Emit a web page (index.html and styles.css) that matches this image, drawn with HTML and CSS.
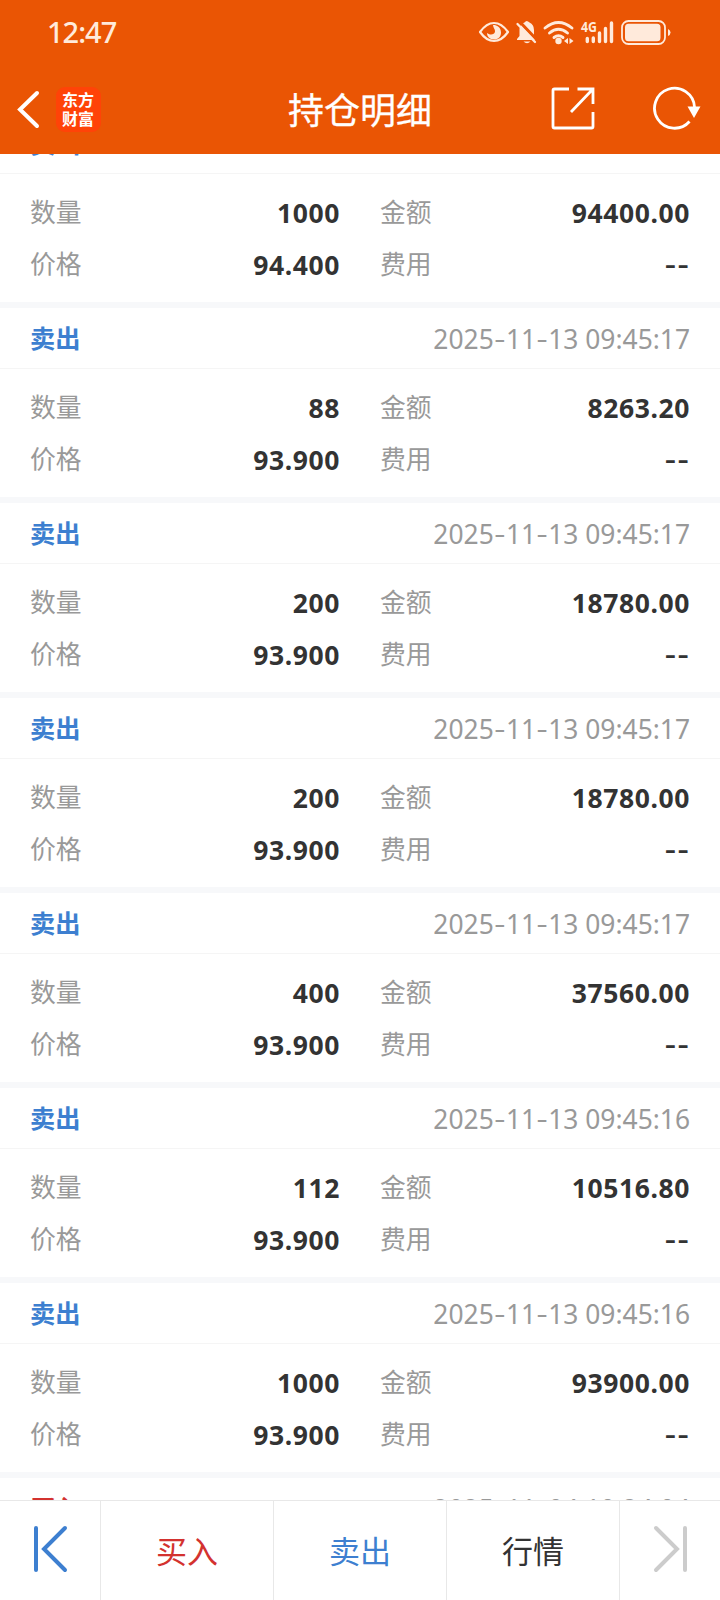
FILE: index.html
```
<!DOCTYPE html>
<html lang="zh-CN">
<head>
<meta charset="utf-8">
<title>持仓明细</title>
<link rel="stylesheet" href="styles.css">
</head>
<body>
<div class="screen">
  <header class="top">
    <div class="status">
      <span class="clock">12:47</span>
      <svg class="status-icons" width="200" height="40" viewBox="0 0 200 40" fill="none" stroke="#ffeadb" stroke-linecap="round" stroke-linejoin="round">
        <path d="M5 21C10 14 15 12 19 12S28 14 33 21C28 28 23 30 19 30S10 28 5 21Z" stroke-width="2.200"/>
        <path d="M18 14C20.500 13.500 26 15.500 26 21.500C26 26 23 28.500 19 28.500C14.500 28.500 12 25.500 12 22C14 24 19.500 24.500 20 20.500C20.200 18 18.500 17.500 18 14Z" fill="#ffeadb" stroke="none"/>
        <path d="M44.500 17.500Q46 12.500 49.500 11.500Q51.500 8.500 54.500 11.500Q59 13.500 59 19V26L60 29H42V28L44.500 25Z" fill="#ffeadb" stroke="none"/>
        <path d="M48.500 30.500H55.500Q52 34 48.500 30.500Z" fill="#ffeadb" stroke="none"/>
        <path d="M44 10L63 30" stroke="#ea5504" stroke-width="3"/>
        <path d="M42.500 13L60 31" stroke-width="2.300"/>
        <path d="M70 17Q83.500 6 97 17M74.500 22Q83.500 14.500 92.500 22M79 26.500Q83.500 23 88 26.500" stroke-width="2.900"/>
        <circle cx="83.500" cy="30" r="3.200" fill="#ffeadb" stroke="none"/>
        <path d="M93 27V33L89 30ZM94.500 27V33L98.500 30Z" fill="#ffeadb" stroke="none"/>
        <path d="M112.300 27.500V30.500M118.300 27V30.500M124.500 22V30.500M130.500 17.500V30.500M136.500 12V30.500" stroke-width="3.400"/>
        <rect x="147" y="10" width="43" height="23" rx="6.500" stroke-width="1.800"/>
        <rect x="150" y="12.800" width="35.500" height="17.500" rx="3.500" fill="#ffeadb" stroke="none"/>
        <path d="M193 18V25Q195.500 24 195.500 21.500T193 18Z" fill="#ffeadb" stroke="none"/>
        <text class="net" x="106" y="21" textLength="16" lengthAdjust="spacingAndGlyphs">4G</text>
      </svg>
    </div>
    <div class="nav">
      <svg class="back" width="24" height="40" viewBox="0 0 24 40"><path d="M20 4L3 20.500L20 37" fill="none" stroke="#fff" stroke-width="4" stroke-linecap="round"/></svg>
      <div class="logo"><span>东方</span><span>财富</span></div>
      <h1 class="title">持仓明细</h1>
      <svg class="share" width="44" height="44" viewBox="0 0 44 44" fill="none" stroke="#fff" stroke-width="2.800"><path d="M18 2H3.500Q2 2 2 3.500V39.500Q2 41 3.500 41H40.500Q42 41 42 39.500V25M26.500 2H42V17M20 25L41 3"/></svg>
      <svg class="reload" width="50" height="46" viewBox="0 0 50 46"><path d="M37.500 35.500A20 20 0 1 1 42.500 21" fill="none" stroke="#fff" stroke-width="2.800"/><path d="M35.500 20.500H48.500L42 32Z" fill="#fff"/></svg>
    </div>
  </header>

  <main class="list">
    <section class="card">
      <div class="card-head"><b class="sell">卖出</b><time>2025<i>-</i>11<i>-</i>13 09:45:17</time></div>
      <div class="card-body"><span>数量</span><b>1000</b><span>金额</span><b>94400.00</b><span>价格</span><b>94.400</b><span>费用</span><b class="none">--</b></div>
    </section>
    <section class="card">
      <div class="card-head"><b class="sell">卖出</b><time>2025<i>-</i>11<i>-</i>13 09:45:17</time></div>
      <div class="card-body"><span>数量</span><b>88</b><span>金额</span><b>8263.20</b><span>价格</span><b>93.900</b><span>费用</span><b class="none">--</b></div>
    </section>
    <section class="card">
      <div class="card-head"><b class="sell">卖出</b><time>2025<i>-</i>11<i>-</i>13 09:45:17</time></div>
      <div class="card-body"><span>数量</span><b>200</b><span>金额</span><b>18780.00</b><span>价格</span><b>93.900</b><span>费用</span><b class="none">--</b></div>
    </section>
    <section class="card">
      <div class="card-head"><b class="sell">卖出</b><time>2025<i>-</i>11<i>-</i>13 09:45:17</time></div>
      <div class="card-body"><span>数量</span><b>200</b><span>金额</span><b>18780.00</b><span>价格</span><b>93.900</b><span>费用</span><b class="none">--</b></div>
    </section>
    <section class="card">
      <div class="card-head"><b class="sell">卖出</b><time>2025<i>-</i>11<i>-</i>13 09:45:17</time></div>
      <div class="card-body"><span>数量</span><b>400</b><span>金额</span><b>37560.00</b><span>价格</span><b>93.900</b><span>费用</span><b class="none">--</b></div>
    </section>
    <section class="card">
      <div class="card-head"><b class="sell">卖出</b><time>2025<i>-</i>11<i>-</i>13 09:45:16</time></div>
      <div class="card-body"><span>数量</span><b>112</b><span>金额</span><b>10516.80</b><span>价格</span><b>93.900</b><span>费用</span><b class="none">--</b></div>
    </section>
    <section class="card">
      <div class="card-head"><b class="sell">卖出</b><time>2025<i>-</i>11<i>-</i>13 09:45:16</time></div>
      <div class="card-body"><span>数量</span><b>1000</b><span>金额</span><b>93900.00</b><span>价格</span><b>93.900</b><span>费用</span><b class="none">--</b></div>
    </section>
    <section class="card">
      <div class="card-head"><b class="buy">买入</b><time>2025<i>-</i>11<i>-</i>04 10:24:04</time></div>
    </section>
  </main>

  <footer class="bar">
    <div class="cell"><svg width="36" height="50" viewBox="0 0 36 50" fill="none" stroke="#3d7fd0" stroke-width="4" stroke-linecap="round"><path d="M4 4V46M33 4L12 25L33 46"/></svg></div>
    <div class="cell buy">买入</div>
    <div class="cell sell">卖出</div>
    <div class="cell">行情</div>
    <div class="cell"><svg width="36" height="50" viewBox="0 0 36 50" fill="none" stroke="#ccc" stroke-width="4" stroke-linecap="round"><path d="M33 4V46M4 4L25 25L4 46"/></svg></div>
  </footer>
</div>
</body>
</html>
```
FILE: styles.css
```
* { box-sizing: border-box; }
body { margin: 0; }
.screen {
  width: 720px;
  height: 1600px;
  display: flex;
  flex-direction: column;
  overflow: hidden;
  background: #fff;
  color: #333;
  font-family: "Noto Sans", "Noto Sans CJK SC", sans-serif;
}
.top { height: 154px; flex: none; background: #ea5504; color: #fff; }
.status { height: 64px; display: flex; justify-content: space-between; padding: 0 45px 0 47px; }
.clock { color: #ffeadb; font-size: 29px; line-height: 64px; font-weight: 500; letter-spacing: -1px; }
.status-icons { margin-top: 11px; }
.net { font: 700 14px "Noto Sans", sans-serif; fill: #ffeadb; stroke: none; }
.nav {
  height: 90px;
  display: grid;
  grid-template-columns: 24px 60px 1fr 44px 57px 50px;
  align-items: center;
  padding: 0 18px 0 17px;
}
.back { margin-top: -1px; }
.logo {
  margin-left: 15px;
  width: 45px;
  height: 45px;
  border-radius: 9px;
  background: #ff4308;
  font: 700 16px/19px "Noto Sans CJK SC", sans-serif;
  display: flex;
  flex-direction: column;
  align-items: center;
  padding-top: 3px;
}
.logo span { height: 19px; margin-left: -1px; }
.title { margin: 0; padding-left: 187px; font: 400 36px/60px "Noto Sans CJK SC", sans-serif; white-space: nowrap; margin-top: -2px; -webkit-text-stroke: 0.3px #fff; }
.share { grid-column: 4; margin-top: -1px; }
.reload { grid-column: 6; }
.list { flex: 1; min-height: 0; overflow: hidden; }
.card { height: 195px; border-bottom: 6px solid #f7f8fa; }
.card:first-child { margin-top: -41px; }
.card-head {
  height: 61px;
  border-bottom: 1px solid #f5f5f5;
  padding: 0 30px;
  display: flex;
  justify-content: space-between;
  align-items: flex-start;
  font-size: 26.4px;
  line-height: 62px;
}
.card-head b { font-family: "Noto Sans CJK SC", sans-serif; font-size: 25.2px; line-height: 58px; }
.sell { color: #3d7fd0; }
.buy { color: #d3322f; }
time { color: #999; }
time i { font-family: Inter, sans-serif; font-style: normal; line-height: 1; }
.card-body {
  padding: 12px 30px 0;
  display: grid;
  grid-template-columns: 60px 250px 100px 250px;
  grid-auto-rows: 52px;
  line-height: 52px;
}
.card-body span { color: #999; font-family: "Noto Sans CJK SC", sans-serif; font-size: 25.8px; line-height: 50px; }
.card-body span:nth-of-type(even) { padding-left: 40px; }
.card-body b { text-align: right; font-size: 26.5px; letter-spacing: 0.6px; line-height: 54px; }
.card-body .none { font-family: Inter, sans-serif; font-weight: 600; line-height: 55px; }
.bar {
  flex: none;
  height: 100px;
  border-top: 1px solid #e8e8e8;
  display: grid;
  grid-template-columns: 101px 173px 173px 173px 100px;
  font: 400 31px/97px "Noto Sans CJK SC", sans-serif;
}
.cell { border-right: 1px solid #e8e8e8; display: flex; justify-content: center; align-items: flex-start; }
.cell svg { margin-top: 23px; }
.cell:last-child { border-right: 0; }
```
